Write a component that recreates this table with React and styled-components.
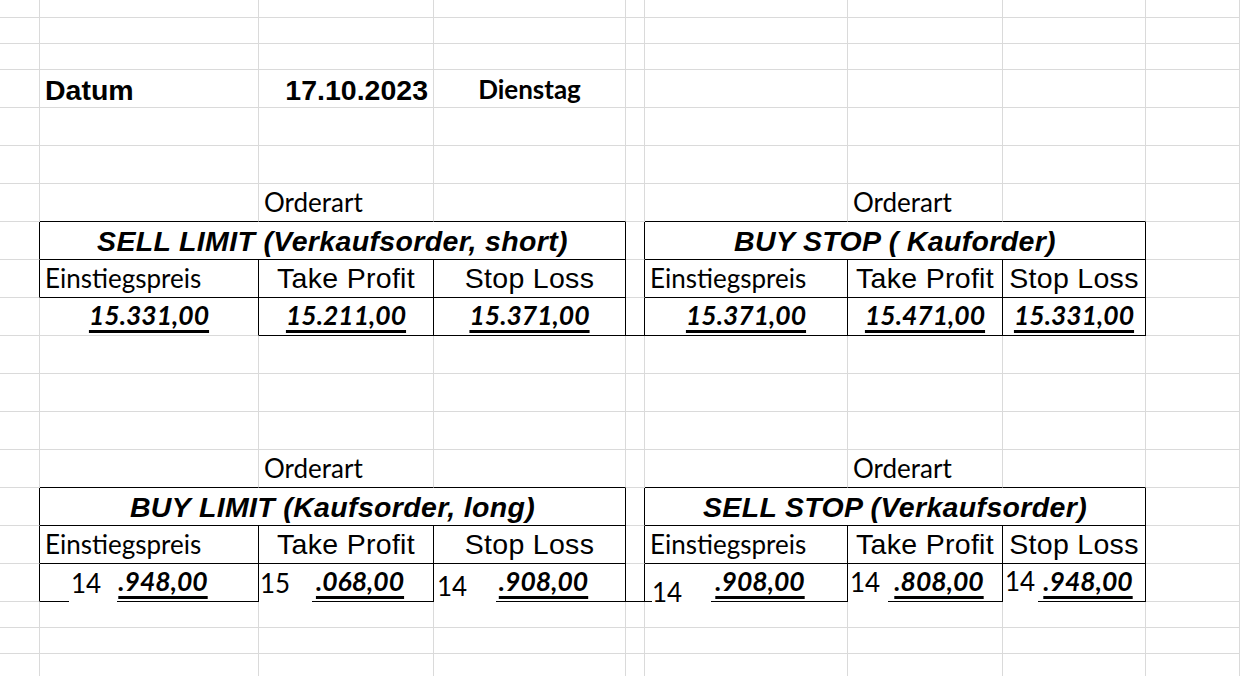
import React from "react";
import styled, { createGlobalStyle } from "styled-components";

const GRID = "#dadada";
const ARIAL = `"Liberation Sans", Arial, sans-serif`;
const CALIBRI = `Lato, "Noto Sans", sans-serif`;

const GlobalStyle = createGlobalStyle`
  html, body {
    margin: 0;
    padding: 0;
    background: #fff;
    overflow: hidden;
  }
  body {
    color: #000;
    font-family: ${ARIAL};
  }
`;

const Sheet = styled.div`
  display: flex;
  flex-direction: column;
  width: 1240px;
  height: 676px;
  overflow: hidden;
`;

const Row = styled.div`
  display: grid;
  grid-template-columns: 40px 219px 175px 192px 19px 203px 155px 143px 1fr;
  height: ${(p) => p.$h}px;
  flex: none;
`;

const justify = { left: "flex-start", center: "center", right: "flex-end" };

const Cell = styled.div`
  position: relative;
  grid-column: span ${(p) => p.$span || 1};
  display: flex;
  align-items: flex-end;
  justify-content: ${(p) => justify[p.$align || "left"]};
  padding: 0 5px;
  min-width: 0;
  white-space: nowrap;
  border-right: 1px solid ${(p) => (p.$r ? "#000" : GRID)};
  border-bottom: 1px solid ${(p) => (p.$b ? "#000" : GRID)};
`;

const Big = styled.span`
  font: 700 28.5px/1 ${ARIAL};
  margin-bottom: 3px;
`;

const Day = styled.span`
  font: 700 26px/1 ${CALIBRI};
  margin-bottom: 5px;
`;

const Label = styled.span`
  font: 400 26px/1 ${CALIBRI};
  margin-bottom: 6px;
`;

const Title = styled.span`
  font: italic 700 28.5px/1 ${ARIAL};
  letter-spacing: 0.35px;
  margin-bottom: 4px;
`;

const Head = styled.span`
  font: 400 28.5px/1 ${ARIAL};
  letter-spacing: 0.3px;
  margin-bottom: 5px;
`;

// $lead keeps the room of the leading digits that the pasted box hides
const Price = styled.span`
  position: relative;
  z-index: 2;
  font: italic 700 26.5px/1 ${CALIBRI};
  text-decoration: underline;
  text-decoration-thickness: 2.5px;
  text-underline-offset: 5px;
  margin: 0 0 7px ${(p) => p.$lead || 0}px;
`;

// white text box pasted over the value cell
const Sticker = styled.span`
  position: absolute;
  z-index: 1;
  top: 2px;
  bottom: ${(p) => -1 - (p.$ext || 0)}px;
  left: ${(p) => p.$left}px;
  width: ${(p) => p.$width}px;
  box-sizing: border-box;
  display: flex;
  align-items: flex-end;
  padding: 0 0 ${(p) => p.$pb}px ${(p) => p.$pl}px;
  background: #fff;
  font: 400 26px/1 ${CALIBRI};
`;

const topTables = [
  {
    title: "SELL LIMIT (Verkaufsorder, short)",
    open: true,
    prices: [{ v: "15.331,00" }, { v: "15.211,00" }, { v: "15.371,00" }],
  },
  {
    title: "BUY STOP ( Kauforder)",
    prices: [{ v: "15.371,00" }, { v: "15.471,00" }, { v: "15.331,00" }],
  },
];

const bottomTables = [
  {
    title: "BUY LIMIT (Kaufsorder, long)",
    prices: [
      { v: ".948,00", s: { t: "14", left: 29, width: 48, pl: 2, pb: 6 } },
      { v: ".068,00", s: { t: "15", left: 0, width: 53, pl: 1, pb: 6 } },
      { v: ".908,00", s: { t: "14", left: 0, width: 62, pl: 3, pb: 3 } },
    ],
  },
  {
    title: "SELL STOP (Verkaufsorder)",
    prices: [
      { v: ".908,00", s: { t: "14", left: 7, width: 59, pl: 0, pb: 1, ext: 4 } },
      { v: ".808,00", s: { t: "14", left: 0, width: 40, pl: 2, pb: 7 } },
      { v: ".948,00", s: { t: "14", left: 0, width: 35, pl: 2, pb: 8 } },
    ],
  },
];

const blanks = (n, h) => (
  <Row $h={h}>
    {Array.from({ length: n }, (_, i) => (
      <Cell key={i} />
    ))}
  </Row>
);

const OrderartRow = () => (
  <Row $h={38}>
    <Cell />
    <Cell $b />
    <Cell $b>
      <Label>Orderart</Label>
    </Cell>
    <Cell $b />
    <Cell />
    <Cell $b />
    <Cell $b>
      <Label>Orderart</Label>
    </Cell>
    <Cell $b />
    <Cell />
  </Row>
);

const TitleRow = ({ tables }) => (
  <Row $h={38}>
    <Cell $r />
    <Cell $span={3} $r $b $align="center">
      <Title>{tables[0].title}</Title>
    </Cell>
    <Cell $r />
    <Cell $span={3} $r $b $align="center">
      <Title>{tables[1].title}</Title>
    </Cell>
    <Cell />
  </Row>
);

const HeadCells = () => (
  <>
    <Cell $r $b>
      <Label>Einstiegspreis</Label>
    </Cell>
    <Cell $r $b $align="center">
      <Head>Take Profit</Head>
    </Cell>
    <Cell $r $b $align="center">
      <Head>Stop Loss</Head>
    </Cell>
  </>
);

const HeadRow = () => (
  <Row $h={38}>
    <Cell $r />
    <HeadCells />
    <Cell $r />
    <HeadCells />
    <Cell />
  </Row>
);

const PriceCells = ({ table }) =>
  table.prices.map((p, i) => (
    <Cell key={i} $r $b={!(table.open && i === 0)} $align="center">
      <Price $lead={p.s ? 28 : 0}>{p.v}</Price>
      {p.s && (
        <Sticker $left={p.s.left} $width={p.s.width} $pl={p.s.pl} $pb={p.s.pb} $ext={p.s.ext}>
          {p.s.t}
        </Sticker>
      )}
    </Cell>
  ));

const PriceRow = ({ tables }) => (
  <Row $h={38}>
    <Cell $r={!tables[0].open} />
    <PriceCells table={tables[0]} />
    <Cell $r $b />
    <PriceCells table={tables[1]} />
    <Cell />
  </Row>
);

const OrderBlock = ({ tables }) => (
  <>
    <OrderartRow />
    <TitleRow tables={tables} />
    <HeadRow />
    <PriceRow tables={tables} />
  </>
);

export default function App() {
  return (
    <>
      <GlobalStyle />
      <Sheet>
        {blanks(9, 18)}
        {blanks(9, 26)}
        {blanks(9, 26)}
        <Row $h={38}>
          <Cell />
          <Cell>
            <Big>Datum</Big>
          </Cell>
          <Cell $align="right">
            <Big>17.10.2023</Big>
          </Cell>
          <Cell $align="center">
            <Day>Dienstag</Day>
          </Cell>
          <Cell />
          <Cell />
          <Cell />
          <Cell />
          <Cell />
        </Row>
        {blanks(9, 38)}
        {blanks(9, 38)}
        <OrderBlock tables={topTables} />
        {blanks(9, 38)}
        {blanks(9, 38)}
        {blanks(9, 38)}
        <OrderBlock tables={bottomTables} />
        {blanks(9, 26)}
        {blanks(9, 26)}
        {blanks(9, 26)}
      </Sheet>
    </>
  );
}
